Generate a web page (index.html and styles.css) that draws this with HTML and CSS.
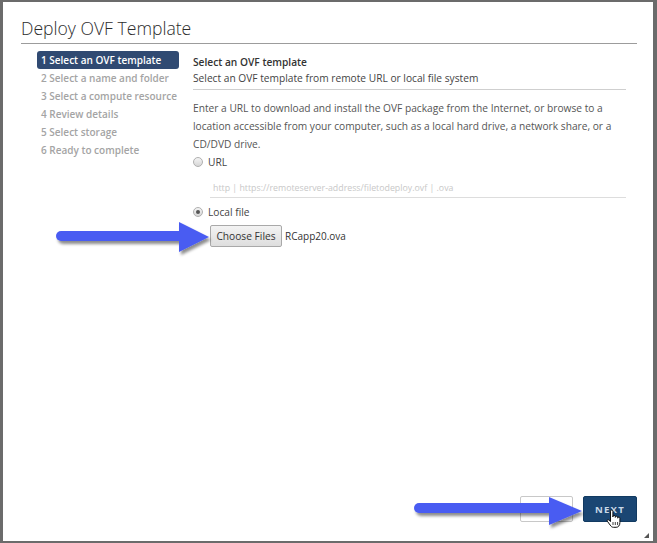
FILE: index.html
```html
<!DOCTYPE html>
<html lang="en">
<head>
    <meta charset="UTF-8">
    <title>Deploy OVF Template</title>
    <link rel="stylesheet" href="styles.css">
</head>
<body>
    <div class="backdrop">
        <div class="dialog">
            <div class="dialog-header">
                <h1 class="dialog-title">Deploy OVF Template</h1>
            </div>

            <div class="dialog-body">
                <!-- wizard steps -->
                <ul class="steps">
                    <li class="step active">1 Select an OVF template</li>
                    <li class="step">2 Select a name and folder</li>
                    <li class="step">3 Select a compute resource</li>
                    <li class="step">4 Review details</li>
                    <li class="step">5 Select storage</li>
                    <li class="step">6 Ready to complete</li>
                </ul>

                <div class="step-content">
                    <div class="step-head">
                        <div class="step-title">Select an OVF template</div>
                        <div class="step-subtitle">Select an OVF template from remote URL or local file system</div>
                    </div>
                    <p class="step-text">Enter a URL to download and install the OVF package from the Internet, or browse to a location accessible from your computer, such as a local hard drive, a network share, or a CD/DVD drive.</p>

                    <label class="radio-row"><span class="radio"></span>URL</label>
                    <div class="url-input">http | https://remoteserver-address/filetodeploy.ovf | .ova</div>

                    <label class="radio-row local"><span class="radio checked"></span>Local file</label>
                    <div class="file-row">
                        <button class="file-btn">Choose Files</button>
                        <span class="file-name">RCapp20.ova</span>
                    </div>
                </div>
            </div>

            <div class="dialog-footer">
                <button class="btn btn-outline"></button>
                <button class="btn btn-primary">NEXT</button>
            </div>

            <span class="resize-grip"></span>
        </div>

        <!-- callout arrows -->
        <svg class="callouts" width="657" height="543" viewBox="0 0 657 543">
            <defs>
                <filter id="shade" x="-10%" y="-30%" width="130%" height="180%">
                    <feDropShadow dx="2" dy="3" stdDeviation="1.8" flood-color="#000" flood-opacity="0.45"/>
                </filter>
            </defs>
            <g fill="#4a5cf2" filter="url(#shade)">
                <rect x="56" y="231" width="128" height="10" rx="5"/>
                <polygon points="179,222 209,237 179,252"/>
                <rect x="414" y="503" width="140" height="10" rx="5"/>
                <polygon points="549,497 582,511 549,525"/>
            </g>
        </svg>

        <svg class="cursor" width="16" height="20" viewBox="0 0 16 20">
            <path d="M4.5 10V2.2a1.2 1.2 0 0 1 2.4 0V8V7.6a1.2 1.2 0 0 1 2.4 0V8.4a1.2 1.2 0 0 1 2.4 0V9.2a1.1 1.1 0 0 1 2.2 0V13.5c0 2.8-1.4 4.8-3.8 4.8H7.4c-1.4 0-2.4-.9-3.3-2.3L1.3 12.2c-.6-.9.5-2 1.4-1.3L4.5 12.5Z" fill="#fff" stroke="#111" stroke-width="1"/>
            <path d="M7 13v3M9.3 13v3M11.6 13v3" stroke="#111" stroke-width=".8"/>
        </svg>
    </div>
</body>
</html>
```

FILE: styles.css
```css
*{
    margin: 0;
    padding: 0;
    box-sizing: border-box;
}
body{
    background-color: #6b6b6b;
    font-family: "Open Sans", "Liberation Sans", sans-serif;
}
.backdrop{
    position: relative;
    width: 657px;
    height: 543px;
    padding: 2px 4px 2px 3px;
}

/* dialog */
.dialog{
    position: relative;
    height: 539px;
    background-color: #fff;
    display: flex;
    flex-direction: column;
    padding: 14px 16px 19px 18px;
}
.dialog-header{
    border-bottom: 1px solid #9c9c9c;
    padding-bottom: 3px;
}
.dialog-title{
    font-size: 17.6px;
    line-height: 24px;
    font-weight: 300;
    color: #2c2c2c;
}

.dialog-body{
    flex: 1;
    display: flex;
    gap: 14px;
    padding: 7px 11px 0 16px;
}

/* steps list */
.steps{
    list-style: none;
    width: 142px;
    flex-shrink: 0;
}
.step{
    font-size: 10px;
    line-height: 18px;
    font-weight: 600;
    color: #a4a4a4;
    padding-left: 4px;
    white-space: nowrap;
}
.step.active{
    background-color: #304a72;
    color: #fff;
    border-radius: 3px;
}

/* step content */
.step-content{
    flex: 1;
    padding-top: 3px;
    font-size: 10.2px;
    color: #555;
}
.step-head{
    border-bottom: 1px solid #cfcfcf;
    padding-bottom: 3px;
}
.step-title{
    font-weight: 600;
    color: #333;
    line-height: 16px;
}
.step-subtitle{
    line-height: 16px;
    color: #444;
}
.step-text{
    margin-top: 9px;
    line-height: 18px;
}
.radio-row{
    display: flex;
    align-items: center;
    gap: 5px;
    line-height: 18px;
    color: #444;
}
.radio-row.local{
    margin-top: 5px;
}
.radio{
    width: 10px;
    height: 10px;
    border-radius: 50%;
    border: 1px solid #b0b0b0;
    background: linear-gradient(#f4f4f4, #d6d6d6);
    position: relative;
}
.radio.checked::after{
    content: "";
    position: absolute;
    left: 2px;
    top: 2px;
    width: 4px;
    height: 4px;
    border-radius: 50%;
    background-color: #555;
}
.url-input{
    margin: 8px 0 0 17px;
    height: 19px;
    line-height: 18px;
    padding-left: 3px;
    border-bottom: 1px solid #ddd;
    color: #c8c8c8;
    font-size: 8.8px;
}
.file-row{
    margin: 4px 0 0 17px;
    display: flex;
    align-items: center;
    gap: 3px;
}
.file-btn{
    height: 22px;
    width: 72px;
    font-family: inherit;
    font-size: 10.2px;
    color: #333;
    border: 1px solid #a9a9a9;
    border-radius: 2px;
    background: linear-gradient(#f3f3f3, #dedede);
}
.file-name{
    font-size: 10px;
    color: #333;
}

/* footer buttons */
.dialog-footer{
    display: flex;
    justify-content: flex-end;
    gap: 10px;
}
.btn{
    height: 26px;
    border-radius: 2px;
    font-family: inherit;
    font-size: 9.6px;
    font-weight: 700;
    letter-spacing: 1.2px;
}
.btn-outline{
    width: 53px;
    background: #fff;
    border: 1px solid #c8c8c8;
}
.btn-primary{
    width: 54px;
    background-color: #1a4673;
    border: 1px solid #123a61;
    color: #c8d8e8;
}

.resize-grip{
    position: absolute;
    right: 4px;
    bottom: 3px;
    width: 0;
    height: 0;
    border-left: 5px solid transparent;
    border-bottom: 5px solid #555;
}

/* overlays */
.callouts{
    position: absolute;
    left: 0;
    top: 0;
    pointer-events: none;
}
.cursor{
    position: absolute;
    left: 606px;
    top: 509px;
}
```
